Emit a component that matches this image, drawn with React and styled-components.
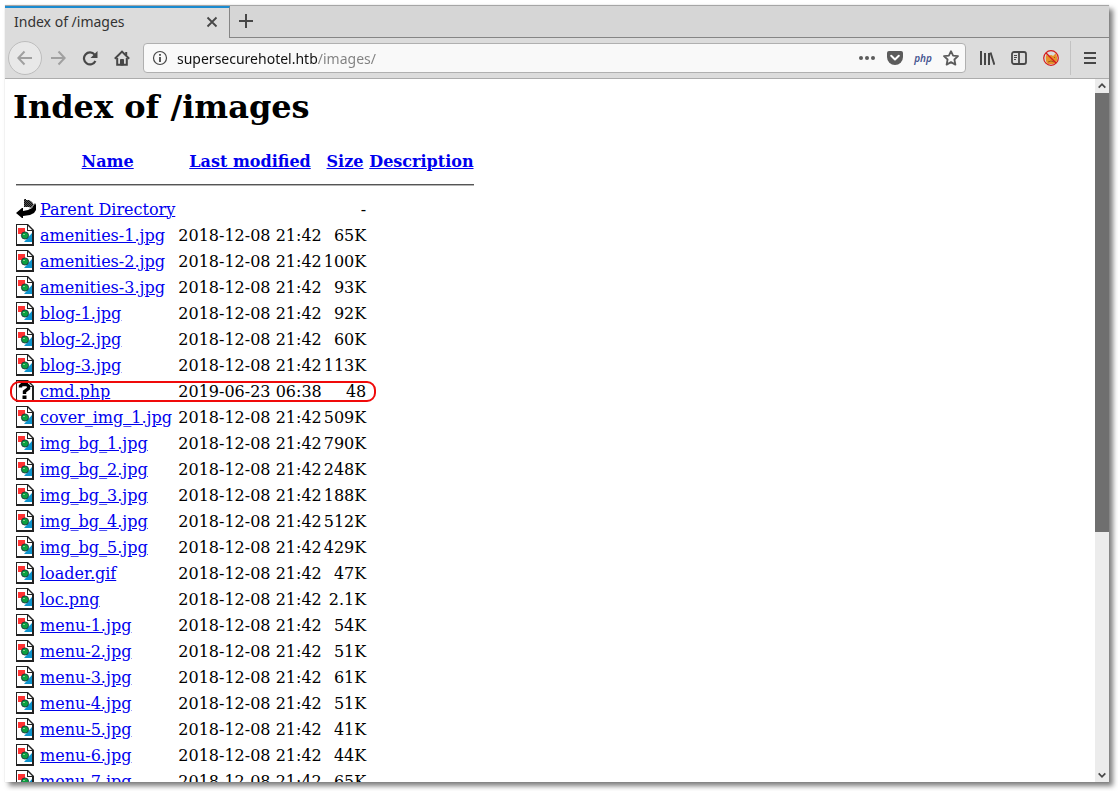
import React from "react";
import styled, { createGlobalStyle } from "styled-components";

const Global = createGlobalStyle`
  *, *::before, *::after { box-sizing: border-box; }
  html, body { margin: 0; background: #fff; }
  body { overflow: hidden; }
`;

const uiFont = `"Noto Sans", "Open Sans", sans-serif`;

const Page = styled.div`
  height: 100vh;
  padding: 5px 9px 9px 5px;
  display: flex;
`;

const Window = styled.div`
  flex: 1;
  min-width: 0;
  display: flex;
  flex-direction: column;
  background: #fff;
  box-shadow: 4px 4px 5px 0 rgba(0, 0, 0, 0.5), 0 0 1px rgba(0, 0, 0, 0.2);
`;

const TabStrip = styled.div`
  display: flex;
  height: 33px;
  background: #d6d6d6;
  border-top: 1px solid #a6a6a6;
`;

const Tab = styled.div`
  display: flex;
  align-items: center;
  justify-content: space-between;
  width: 225px;
  padding: 0 8px 2px 9px;
  background: #dcdcdc;
  border-top: 2px solid #1b8bd0;
  border-right: 1px solid #858585;
  color: #333;
  font: 14px/20px ${uiFont};
`;

const StripRest = styled.div`
  flex: 1;
  display: flex;
  align-items: center;
  padding: 0 7px 1px;
  border-bottom: 1px solid #858585;
`;

const IconButton = styled.button`
  display: flex;
  align-items: center;
  justify-content: center;
  flex: none;
  width: ${(p) => p.$size || 32}px;
  height: ${(p) => p.$size || 32}px;
  padding: 0;
  border: 0;
  background: none;
  color: ${(p) => (p.$dim ? "#a0a0a0" : "#474747")};
`;

const BackButton = styled(IconButton)`
  width: 34px;
  height: 34px;
  border: 1px solid #bdbdbd;
  border-radius: 50%;
  background: #e8e8e8;
`;

const Toolbar = styled.div`
  display: flex;
  align-items: center;
  height: 41px;
  padding: 0 3px;
  background: #dcdcdc;
  border-bottom: 1px solid #acacac;
`;

const UrlBar = styled.div`
  flex: 1;
  min-width: 0;
  display: flex;
  align-items: center;
  height: 30px;
  margin: 0 5px;
  padding-left: 1px;
  background: #f9f9f9;
  border: 1px solid #b0b0b0;
  border-radius: 4px;
`;

const UrlInput = styled.input`
  flex: 1;
  min-width: 0;
  height: 24px;
  padding: 0 0 0 2px;
  border: 0;
  outline: 0;
  color: transparent;
  background: linear-gradient(to right, #111 142px, #808080 142px);
  background-clip: text;
  -webkit-background-clip: text;
  font: 14px/20px ${uiFont};
`;

const PhpLabel = styled.span`
  color: #45538f;
  font: italic 600 10px/16px ${uiFont};
`;

const Divider = styled.div`
  width: 1px;
  height: 34px;
  margin: 0 3px;
  background: #c2c2c2;
`;

const Viewport = styled.div`
  flex: 1;
  min-height: 0;
  display: flex;
`;

const Content = styled.main`
  flex: 1;
  min-width: 0;
  overflow: hidden;
  padding: 10px 8px 0;
  color: #000;
  font: 16px/19px "DejaVu Serif", serif;
`;

const Heading = styled.h1`
  margin: 0 0 21px;
  font-size: 32px;
  line-height: 37px;
  font-weight: bold;
`;

const Listing = styled.table`
  border-spacing: 2px;
  white-space: nowrap;
`;

const Cell = styled.td`
  height: 24px;
  padding: 1px;
  text-align: left;
`;

const NumberCell = styled(Cell)`
  padding: 1px 0;
  text-align: right;
`;

const IconCell = styled(Cell)`
  position: relative;
  svg { display: block; }
`;

const HeadCell = styled.th`
  height: 24px;
  padding: 1px ${(p) => (p.$tight ? 0 : 1)}px;
`;

const RuleCell = styled.th`
  padding: 1px;
`;

const Rule = styled.hr`
  height: 2px;
  margin: 8px 0;
  border: 0;
  border-top: 1px solid #555;
  border-bottom: 1px solid #b5b5b5;
`;

const Link = styled.a`
  color: #0000ee;
  text-decoration: underline;
`;

const Highlight = styled.span`
  position: absolute;
  top: 2px;
  left: -5px;
  width: 366px;
  height: 21px;
  border: 2px solid #f00a0a;
  border-radius: 9px;
`;

const ScrollBar = styled.div`
  width: 14px;
  display: flex;
  flex-direction: column;
  background: #ececec;
`;

const ScrollTrack = styled.div`
  flex: 1;
`;

const ScrollThumb = styled.div`
  height: 65%;
  background: #6f6f6f;
`;

const Stroke = ({ d, w = 2, size = 16, children }) => (
  <svg width={size} height={size} viewBox="0 0 16 16" fill="none" stroke="currentColor" strokeWidth={w} aria-hidden="true">
    {d && <path d={d} />}
    {children}
  </svg>
);

const PageShape = () => (
  <>
    <path d="M0 0H12L18 6V22H0Z" fill="#222" />
    <path d="M1 1H11V7H16V20H1Z" fill="#fff" />
    <path d="M12 2L16 6H12Z" fill="#fff" />
  </>
);

const ImageIcon = () => (
  <svg width="20" height="22" viewBox="0 0 20 22" role="img" aria-label="[IMG]">
    <PageShape />
    <path d="M2 4H9V10H2Z" fill="#ff3333" />
    <path d="M16 9V18H8Z" fill="#0c93cc" />
    <circle cx="9" cy="11.5" r="3.6" fill="#0ba040" stroke="#123" strokeWidth="0.8" />
    <path d="M7 10.5h2" stroke="#7fd08f" />
  </svg>
);

const UnknownIcon = () => (
  <svg width="20" height="22" viewBox="0 0 20 22" role="img" aria-label="[   ]">
    <PageShape />
    <path d="M4.5 7.5V6L6 4.5H10.5L12.5 6V8.5L8.5 11.5V14" fill="none" stroke="#000" strokeWidth="3.4" />
    <path d="M6.5 15.5H10.5V19H6.5Z" fill="#000" />
  </svg>
);

const BackIcon = () => (
  <svg width="20" height="22" viewBox="0 0 20 22" role="img" aria-label="[PARENTDIR]">
    <defs>
      <pattern id="dither" width="2" height="2" patternUnits="userSpaceOnUse">
        <rect width="2" height="2" fill="#555" />
        <rect width="1" height="1" fill="#111" />
        <rect x="1" y="1" width="1" height="1" fill="#111" />
      </pattern>
    </defs>
    <path d="M8 1H10V2H13L16 4L18 7L15 10L13 9H8Z" fill="url(#dither)" />
    <path d="M19 5L20 7V12L18 15L14 17L7 18V20H6L0 15L6 10H7V13L12 12L16 10Z" fill="#000" />
    <path d="M13.5 10.5L18.5 6.5" stroke="#999" strokeWidth="0.8" />
  </svg>
);

const icons = { image: ImageIcon, unknown: UnknownIcon, back: BackIcon };

const image = (name, size) => ({ icon: "image", name, date: "2018-12-08 21:42", size });

const files = [
  { icon: "back", name: "Parent Directory", date: "", size: "-" },
  image("amenities-1.jpg", "65K"),
  image("amenities-2.jpg", "100K"),
  image("amenities-3.jpg", "93K"),
  image("blog-1.jpg", "92K"),
  image("blog-2.jpg", "60K"),
  image("blog-3.jpg", "113K"),
  { icon: "unknown", name: "cmd.php", date: "2019-06-23 06:38", size: "48", marked: true },
  image("cover_img_1.jpg", "509K"),
  image("img_bg_1.jpg", "790K"),
  image("img_bg_2.jpg", "248K"),
  image("img_bg_3.jpg", "188K"),
  image("img_bg_4.jpg", "512K"),
  image("img_bg_5.jpg", "429K"),
  image("loader.gif", "47K"),
  image("loc.png", "2.1K"),
  image("menu-1.jpg", "54K"),
  image("menu-2.jpg", "51K"),
  image("menu-3.jpg", "61K"),
  image("menu-4.jpg", "51K"),
  image("menu-5.jpg", "41K"),
  image("menu-6.jpg", "44K"),
  image("menu-7.jpg", "65K"),
];

const columns = [
  { label: "Name" },
  { label: "Last modified", tight: true },
  { label: "Size", tight: true },
  { label: "Description" },
];

function FileRow({ file }) {
  const Icon = icons[file.icon];
  return (
    <tr>
      <IconCell>
        <Icon />
        {file.marked && <Highlight />}
      </IconCell>
      <Cell><Link href="#">{file.name}</Link></Cell>
      <NumberCell>{file.date}</NumberCell>
      <NumberCell>{file.size}</NumberCell>
      <Cell />
    </tr>
  );
}

export default function App() {
  return (
    <Page>
      <Global />
      <Window>
        <TabStrip>
          <Tab>
            <span>Index of /images</span>
            <IconButton $size={18} aria-label="Close tab">
              <Stroke d="M3.5 3.5L12.5 12.5M12.5 3.5L3.5 12.5" w={1.8} />
            </IconButton>
          </Tab>
          <StripRest>
            <IconButton $size={18} aria-label="New tab">
              <Stroke d="M8 1V15M1 8H15" />
            </IconButton>
          </StripRest>
        </TabStrip>

        <Toolbar>
          <BackButton $dim aria-label="Back">
            <Stroke d="M15 8H1.5M7.5 1.5L1.3 8L7.5 14.5" />
          </BackButton>
          <IconButton $dim aria-label="Forward">
            <Stroke d="M1 8H14.5M8.5 1.5L14.7 8L8.5 14.5" />
          </IconButton>
          <IconButton aria-label="Reload">
            <Stroke>
              <path d="M12.6 4.6A6 6 0 1 0 13.4 11" strokeWidth="2.2" />
              <path d="M15.5 1V8H8.5Z" fill="currentColor" stroke="none" />
            </Stroke>
          </IconButton>
          <IconButton aria-label="Home">
            <Stroke>
              <path d="M0.8 8.8L8 1.6L15.2 8.8" />
              <path d="M3.2 8V14.8H12.8V8" />
              <path d="M6.5 15V9.5H9.5V15Z" fill="currentColor" stroke="currentColor" strokeWidth="1" />
              <path d="M12.2 2V5" />
            </Stroke>
          </IconButton>

          <UrlBar>
            <IconButton $size={30} aria-label="Site information">
              <Stroke w={1.2}>
                <circle cx="8" cy="8" r="6.5" />
                <path d="M8 7V12M8 4V5.8" strokeWidth="1.8" />
              </Stroke>
            </IconButton>
            <UrlInput aria-label="Address" defaultValue="supersecurehotel.htb/images/" />
            <IconButton $size={28} aria-label="Page actions">
              <Stroke>
                <g fill="#5c5c5c" stroke="none">
                  <circle cx="2" cy="8" r="2" />
                  <circle cx="8" cy="8" r="2" />
                  <circle cx="14" cy="8" r="2" />
                </g>
              </Stroke>
            </IconButton>
            <IconButton $size={28} aria-label="Save to Pocket">
              <Stroke>
                <path d="M2 1H14Q16 1 16 3V7A8 8 0 0 1 0 7V3Q0 1 2 1Z" fill="#5c5c5c" stroke="none" />
                <path d="M4.2 5.8L8 9.5L11.8 5.8" stroke="#fff" strokeLinecap="round" strokeLinejoin="round" />
              </Stroke>
            </IconButton>
            <IconButton $size={28}>
              <PhpLabel>php</PhpLabel>
            </IconButton>
            <IconButton $size={28} aria-label="Bookmark">
              <Stroke w={1.8}>
                <path d="M8 1.2L10.1 5.6L15 6.2L11.4 9.5L12.4 14.6L8 12.1L3.6 14.6L4.6 9.5L1 6.2L5.9 5.6Z" stroke="#5c5c5c" strokeLinejoin="round" />
              </Stroke>
            </IconButton>
          </UrlBar>

          <IconButton aria-label="Library">
            <Stroke d="M2 1V15M6 3V15M10 3V15M11.5 2.5L15.4 14.8" />
          </IconButton>
          <IconButton aria-label="Sidebars">
            <Stroke w={1.8}>
              <rect x="1" y="2" width="14" height="12" rx="2" />
              <path d="M8 2V14" />
              <path d="M3 5.5H6M3 7.5H6M3 9.5H5" strokeWidth="1" />
            </Stroke>
          </IconButton>
          <IconButton aria-label="Proxy disabled">
            <Stroke>
              <path d="M3 5L6 6Q8 4 10 6L13 3L14 7Q15 13 10 14H5Q2 12 3 5Z" fill="#e8922a" stroke="none" />
              <path d="M5 12Q8 10 11 12M11 7L12 8" stroke="#9c5a1c" strokeWidth="1" />
              <circle cx="8" cy="8" r="7.3" stroke="#d41a1a" strokeWidth="1.2" />
              <path d="M3 3L13 13" stroke="#d41a1a" strokeWidth="1.4" />
            </Stroke>
          </IconButton>
          <Divider />
          <IconButton aria-label="Menu">
            <Stroke d="M2 3H14M2 8H14M2 13H14" />
          </IconButton>
        </Toolbar>

        <Viewport>
          <Content>
            <Heading>Index of /images</Heading>
            <Listing>
              <thead>
                <tr>
                  <HeadCell />
                  {columns.map((c) => (
                    <HeadCell key={c.label} $tight={c.tight}><Link href="#">{c.label}</Link></HeadCell>
                  ))}
                </tr>
                <tr>
                  <RuleCell colSpan={5}><Rule /></RuleCell>
                </tr>
              </thead>
              <tbody>
                {files.map((f) => <FileRow key={f.name} file={f} />)}
              </tbody>
            </Listing>
          </Content>
          <ScrollBar>
            <IconButton $size={14} aria-label="Scroll up">
              <Stroke size={14} d="M4.2 9.8L8 6L11.8 9.8" />
            </IconButton>
            <ScrollTrack><ScrollThumb /></ScrollTrack>
            <IconButton $size={14} aria-label="Scroll down">
              <Stroke size={14} d="M4.2 6.2L8 10L11.8 6.2" />
            </IconButton>
          </ScrollBar>
        </Viewport>
      </Window>
    </Page>
  );
}
